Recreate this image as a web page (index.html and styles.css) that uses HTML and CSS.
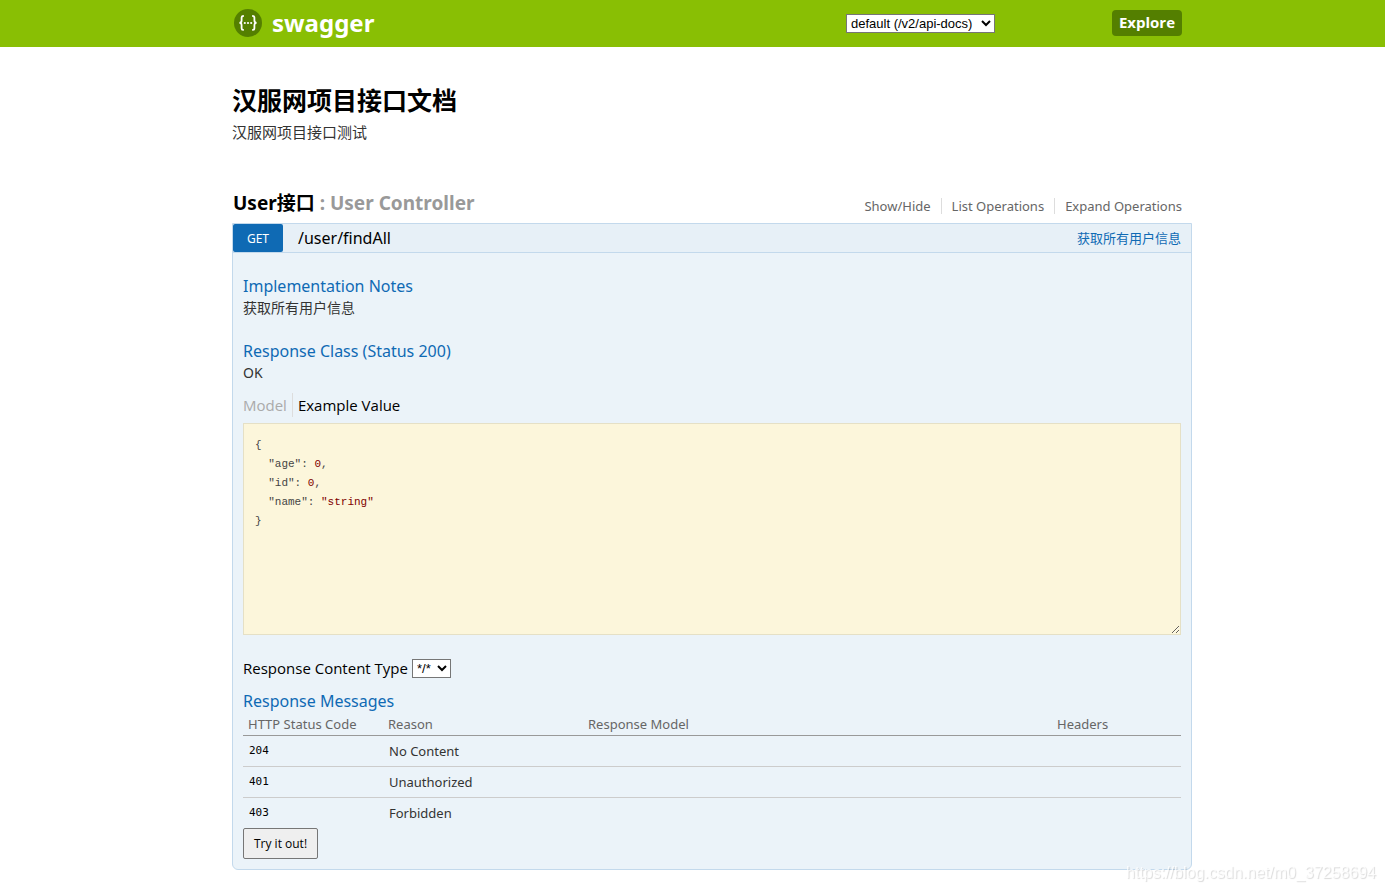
FILE: index.html
```html
<!DOCTYPE html>
<html lang="zh-CN">
<head>
<meta charset="utf-8">
<title>Swagger UI</title>
<link rel="stylesheet" href="styles.css">
</head>
<body>
<header class="topbar">
  <div class="wrap topbar-inner">
    <a class="logo" href="#">
      <svg class="logo-mark" viewBox="0 0 28 28" aria-hidden="true">
        <circle cx="14" cy="14" r="14" fill="#547f00"/>
        <g fill="none" stroke="#fff" stroke-width="1.8">
          <path d="M9.8 7H9.1Q7.6 7 7.6 8.6V11.6Q7.6 13.9 5.4 13.9Q7.6 13.9 7.6 16.2V19.2Q7.6 20.8 9.1 20.8H9.8"/>
          <path d="M18.2 7H18.9Q20.4 7 20.4 8.6V11.6Q20.4 13.9 22.6 13.9Q20.4 13.9 20.4 16.2V19.2Q20.4 20.8 18.9 20.8H18.2"/>
        </g>
        <g fill="#fff"><circle cx="10.8" cy="14" r="1.1"/><circle cx="14" cy="14" r="1.1"/><circle cx="17.2" cy="14" r="1.1"/></g>
      </svg>
      <span>swagger</span>
    </a>
    <form class="api-form">
      <select class="select select-api" aria-label="API">
        <option>default (/v2/api-docs)</option>
      </select>
      <button class="explore" type="button">Explore</button>
    </form>
  </div>
</header>

<main class="wrap">
  <section class="info">
    <h1>汉服网项目接口文档</h1>
    <p>汉服网项目接口测试</p>
  </section>

  <section class="resource">
    <div class="resource-head">
      <h2><a href="#">User接口</a> : User Controller</h2>
      <ul class="options">
        <li><a href="#">Show/Hide</a></li>
        <li><a href="#">List Operations</a></li>
        <li><a href="#">Expand Operations</a></li>
      </ul>
    </div>

    <article class="operation">
      <div class="operation-head">
        <a class="method" href="#">GET</a>
        <a class="path" href="#">/user/findAll</a>
        <a class="summary" href="#">获取所有用户信息</a>
      </div>
      <div class="operation-body">
        <h3>Implementation Notes</h3>
        <p class="note">获取所有用户信息</p>

        <h3 class="spaced">Response Class (Status 200)</h3>
        <p class="note">OK</p>

        <div class="tabs">
          <a class="tab tab-off" href="#">Model</a>
          <a class="tab" href="#">Example Value</a>
        </div>
        <pre class="snippet"><code><span class="line">{</span><span class="line">  "age": <span class="value">0</span>,</span><span class="line">  "id": <span class="value">0</span>,</span><span class="line">  "name": <span class="value">"string"</span></span><span class="line">}</span></code></pre>

        <div class="content-type">
          <label for="content-type">Response Content Type</label>
          <select class="select select-type" id="content-type">
            <option>*/*</option>
          </select>
        </div>

        <h3>Response Messages</h3>
        <table class="messages">
          <thead>
            <tr><th class="col-code">HTTP Status Code</th><th class="col-reason">Reason</th><th class="col-model">Response Model</th><th class="col-headers">Headers</th></tr>
          </thead>
          <tbody>
            <tr><td class="code">204</td><td>No Content</td><td></td><td></td></tr>
            <tr><td class="code">401</td><td>Unauthorized</td><td></td><td></td></tr>
            <tr><td class="code">403</td><td>Forbidden</td><td></td><td></td></tr>
          </tbody>
        </table>
        <button class="try" type="button">Try it out!</button>
      </div>
    </article>
  </section>
</main>
<div class="watermark">https://blog.csdn.net/m0_37258694</div>
</body>
</html>
```

FILE: styles.css
```css
* {
  box-sizing: border-box;
}

body {
  margin: 0;
  background: #fff;
  color: #333;
  font-family: "Noto Sans", "Noto Sans CJK SC", sans-serif;
  font-size: 14px;
}

a {
  color: inherit;
  text-decoration: none;
}

h1, h2, h3, p, ul, pre {
  margin: 0;
  padding: 0;
}

.topbar {
  background: #89bf04;
}

.wrap {
  max-width: 999px;
  margin: 0 auto;
  padding-left: 39px;
}

.topbar-inner {
  display: flex;
  align-items: center;
  justify-content: space-between;
  min-height: 47px;
  padding: 0 10px 1px 41px;
}

.logo {
  display: flex;
  align-items: center;
  gap: 10px;
  color: #fff;
  font-size: 24px;
  font-weight: 700;
  line-height: 32px;
}

.logo-mark {
  width: 28px;
  height: 28px;
}

.api-form {
  display: flex;
  align-items: center;
  gap: 117px;
}

.select {
  height: 19px;
  padding: 0;
  border: 1px solid #767676;
  background: #fff;
  color: #000;
  font-family: "Liberation Sans", sans-serif;
  font-size: 13px;
}

.select-api {
  width: 149px;
}

.explore {
  width: 70px;
  height: 26px;
  padding: 0 0 2px;
  border: 0;
  border-radius: 4px;
  background: #547f00;
  color: #fff;
  font-family: "Open Sans", sans-serif;
  font-size: 15px;
  font-weight: 700;
}

.info {
  padding-top: 35px;
}

.info h1 {
  color: #000;
  font-size: 25px;
  line-height: 36px;
}

.info p {
  font-size: 15px;
  line-height: 28px;
}

.resource {
  margin-top: 39px;
}

.resource-head {
  display: flex;
  align-items: flex-end;
  justify-content: space-between;
  height: 38px;
  padding: 0 10px 5px 1px;
}

.resource-head h2 {
  color: #999;
  font-size: 19px;
  line-height: 30px;
}

.resource-head h2 a {
  color: #000;
}

.options {
  display: flex;
  padding-bottom: 4px;
  color: #666;
  font-size: 13px;
  line-height: 16px;
  list-style: none;
}

.options li + li {
  margin-left: 10px;
  padding-left: 10px;
  border-left: 1px solid #ddd;
}

.operation {
  border: 1px solid #c3d9ec;
  border-radius: 0 0 6px 6px;
  background: #ebf3f9;
}

.operation-head {
  display: flex;
  align-items: center;
  height: 29px;
  padding-right: 10px;
  border-bottom: 1px solid #c3d9ec;
  background: #e7f0f7;
}

.method {
  width: 50px;
  height: 28px;
  border-radius: 2px;
  background: #0f6ab4;
  color: #fff;
  font-size: 12px;
  line-height: 30px;
  text-align: center;
}

.path {
  margin-left: 15px;
  color: #000;
  font-size: 16px;
  line-height: 28px;
}

.summary {
  margin-left: auto;
  color: #0f6ab4;
  font-size: 13px;
  line-height: 26px;
}

.operation-body {
  padding: 22px 10px 10px;
}

.operation-body h3 {
  color: #0f6ab4;
  font-size: 16px;
  font-weight: 400;
  line-height: 22px;
}

.operation-body .spaced {
  margin-top: 21px;
}

.note {
  font-size: 14px;
  line-height: 22px;
}

.tabs {
  display: flex;
  margin: 9px 0 6px;
  color: #000;
  font-family: "Open Sans", sans-serif;
  font-size: 15px;
  line-height: 24px;
}

.tab + .tab {
  margin-left: 5px;
  padding-left: 5px;
  border-left: 1px solid #ddd;
}

.tab-off {
  color: #aaa;
}

.snippet {
  height: 212px;
  padding: 12px 11px;
  border: 1px solid #e5e0c6;
  background: #fcf6db;
  color: #444;
  font-family: "Liberation Mono", monospace;
  font-size: 11px;
  line-height: 19px;
  overflow: auto;
  resize: both;
}

.snippet code {
  font-family: inherit;
}

.line {
  display: block;
}

.value {
  color: #800000;
}

.content-type {
  display: flex;
  align-items: center;
  gap: 4px;
  margin: 22px 0 11px;
  color: #000;
  font-family: "Open Sans", sans-serif;
  font-size: 15px;
  line-height: 22px;
}

.select-type {
  width: 39px;
}

.messages {
  width: 100%;
  border-collapse: collapse;
  table-layout: fixed;
  font-size: 13px;
  line-height: 18px;
}

.messages th {
  height: 23px;
  padding: 2px 5px 0;
  border-bottom: 1px solid #999;
  color: #666;
  font-weight: 400;
  text-align: left;
}

.messages td {
  height: 31px;
  padding: 0 6px;
}

.messages tr + tr td {
  border-top: 1px solid #ccc;
}

.messages .code {
  color: #000;
  font-family: "DejaVu Sans Mono", monospace;
  font-size: 11px;
}

.col-code { width: 140px; }
.col-reason { width: 200px; }
.col-headers { width: 129px; }

.try {
  display: block;
  width: 75px;
  height: 31px;
  padding: 0;
  border: 1px solid #767676;
  border-radius: 2px;
  background: #efefef;
  color: #000;
  font-family: "Open Sans", sans-serif;
  font-size: 12px;
}

.watermark {
  position: fixed;
  right: 9px;
  bottom: 8px;
  color: rgba(255, 255, 255, 0.8);
  font-family: "Liberation Sans", sans-serif;
  font-size: 16px;
  line-height: 20px;
  text-shadow: 1px 1px 1px rgba(0, 0, 0, 0.15);
}
```
